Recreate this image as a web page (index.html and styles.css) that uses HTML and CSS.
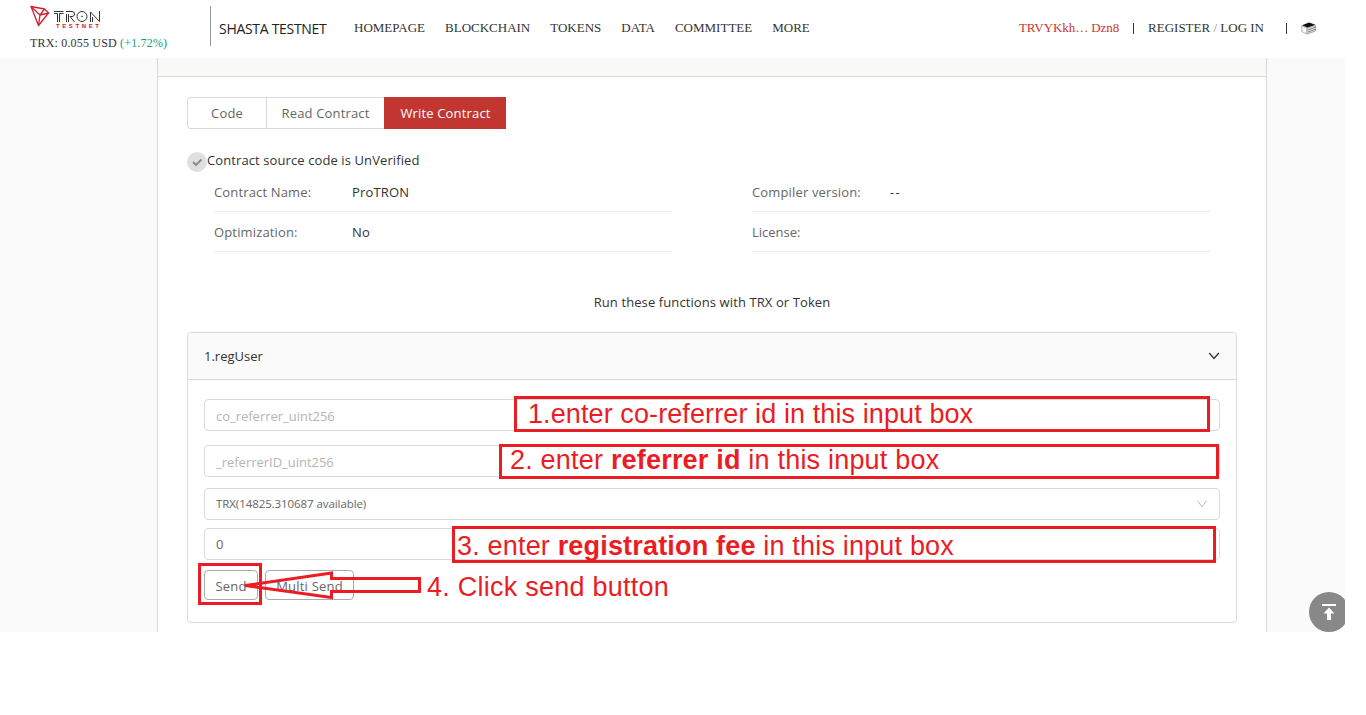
FILE: index.html
```html
<!DOCTYPE html>
<html lang="en">
<head>
<meta charset="utf-8">
<title>TRON Testnet - Write Contract</title>
<link rel="stylesheet" href="styles.css">
</head>
<body>
<div class="app">
  <header class="header">
    <div class="brand">
      <div class="logo">
        <svg class="logo-mark" width="20" height="22" viewBox="0 0 20 22" fill="none" stroke="#d0202e" stroke-width="1.3" stroke-linejoin="round"><path d="M1 1.500 14.500 4 18.500 8 8.500 20.500Z"/><path d="M1 1.500 10 10 18.500 8M14.500 4 10 10 8.500 20.500"/></svg>
        <svg class="logo-word" width="48" height="24" viewBox="0 0 48 24" fill="none">
          <g stroke="#333" stroke-width="1"><path d="M0 6.500H9.500M0 8.500H3.500V17M9.500 8.500H5.500V17M12 6.500H18Q20.500 6.500 20.500 9 20.500 11.500 18 11.500H16L20.500 17M12.500 9V17M14.500 9V17"/><circle cx="28" cy="11.500" r="5"/><path d="M36.500 17V7L45.500 16.500V6M38.500 17V12"/></g>
          <circle cx="28" cy="11.500" r=".8" fill="#333"/>
        </svg>
        <span class="logo-sub">TESTNET</span>
      </div>
      <div class="price">TRX: 0.055 USD <span class="up">(+1.72%)</span></div>
    </div>
    <div class="network">SHASTA TESTNET</div>
    <nav class="nav"><a>HOMEPAGE</a><a>BLOCKCHAIN</a><a>TOKENS</a><a>DATA</a><a>COMMITTEE</a><a>MORE</a></nav>
    <div class="account">
      <span class="address">TRVYKkh… Dzn8</span><i class="bar"></i><span class="login">REGISTER <em>/</em> LOG IN</span><i class="bar bar-last"></i>
      <svg width="16" height="13" viewBox="0 0 16 13"><path d="M.8 4 6 6v6L.8 9.500Z" fill="#fff" stroke="#999" stroke-width=".8"/><path d="M6 6 14.500 3.500V9L6 12.200Z" fill="#ddd" stroke="#999" stroke-width=".8"/><path d="M7 8 15 5M7 10 15 7" stroke="#777" stroke-width=".8"/><path d="M1 3.300 8 .6 14.500 2.800 6.500 5.500Z" fill="#111"/></svg>
    </div>
  </header>
  <main class="page">
    <div class="panel">
      <div class="panel-top"></div>
      <div class="content">
        <div class="tabs"><a class="tab tab-code">Code</a><a class="tab tab-read">Read Contract</a><a class="tab tab-write">Write Contract</a></div>
        <div class="status"><svg width="20" height="20" viewBox="0 0 20 20"><circle cx="10" cy="10" r="10" fill="#dfdfdf"/><path d="m6 10 3 3 5.500-5.500" fill="none" stroke="#888" stroke-width="1.800"/></svg><span>Contract source code is UnVerified</span></div>
        <div class="facts">
          <div class="fact"><span class="label">Contract Name:</span><span>ProTRON</span></div>
          <div class="fact"><span class="label">Compiler version:</span><span class="dashes">--</span></div>
          <div class="fact"><span class="label">Optimization:</span><span>No</span></div>
          <div class="fact"><span class="label label-license">License:</span></div>
        </div>
        <p class="hint">Run these functions with TRX or Token</p>
        <section class="card">
          <div class="card-head"><span>1.regUser</span><svg width="12" height="8" viewBox="0 0 12 8" fill="none" stroke="#333" stroke-width="1.300"><path d="m1.200 1 4.800 5.500L10.800 1"/></svg></div>
          <div class="card-body">
            <div class="field field-a"><span>co_referrer_uint256</span></div>
            <div class="field field-b"><span>_referrerID_uint256</span></div>
            <div class="field field-select"><span>TRX(14825.310687 available)</span><svg width="12" height="8" viewBox="0 0 12 8" fill="none" stroke="#bbb"><path d="m1.500 .8 4.500 6 4.500-6"/></svg></div>
            <div class="field field-amount"><span>0</span></div>
            <div class="buttons"><a class="btn btn-send">Send</a><a class="btn btn-multi">Multi Send</a></div>
          </div>
        </section>
      </div>
    </div>
    <div class="to-top"><svg width="14" height="16" viewBox="0 0 14 16" fill="#fff"><path d="M0 0h14v2H0zM7 3.500 12.500 9.500H9V16H5V9.500H1.500Z"/></svg></div>
  </main>
  <div class="note note-1">1.enter co-referrer id in this input box</div>
  <div class="note note-2">2. enter <b>referrer id</b> in this input box</div>
  <div class="note note-3">3. enter <b>registration fee</b> in this input box</div>
  <div class="note note-send"></div>
  <svg class="arrow" width="182" height="32" viewBox="0 0 182 32" fill="none" stroke="#eb1c24" stroke-width="3"><path d="M4 15.500 90.500 3V8.500H178.500V21.500H90.500V27.500Z"/></svg>
  <div class="note-4">4. Click send button</div>
</div>
</body>
</html>
```
FILE: styles.css
```css
* { box-sizing: border-box; }
body { margin: 0; background: #fff; font: 13px/20px "Open Sans", "Noto Sans", sans-serif; letter-spacing: .1px; color: #333; }
.app { position: relative; width: 1345px; height: 632px; overflow: hidden; display: flex; flex-direction: column; white-space: nowrap; }
.header { height: 58px; flex: none; display: flex; background: #fff; padding-left: 30px; font-family: "Liberation Serif", serif; letter-spacing: 0; }
.brand { width: 180px; padding-top: 5px; }
.logo { position: relative; height: 28px; display: flex; gap: 4px; }
.logo-sub { position: absolute; left: 26px; top: 17px; font: bold 6px/8px "Liberation Sans", sans-serif; letter-spacing: 2.6px; color: #d0202e; }
.price { font-size: 12px; line-height: 20px; letter-spacing: .18px; }
.up { color: #159c75; }
.network { width: 144px; height: 40px; margin-top: 6px; border-left: 1px solid #999; padding: 12px 0 0 8px; font: 14px/22px "Open Sans", sans-serif; letter-spacing: -.3px; color: #222; }
.nav { display: flex; gap: 20px; font-size: 13px; line-height: 20px; padding-top: 18px; }
.account { margin-left: auto; padding: 18px 28px 0 0; display: flex; font-size: 13px; line-height: 20px; }
.account svg { margin: 4px 0 0 14px; }
.address { color: #c73631; letter-spacing: -.08px; }
.bar { width: 1px; height: 11px; background: #333; margin: 5px 14px 0 14px; }
.bar-last { margin: 5px 0 0 22px; }
em { font-style: normal; color: #888; }
.page { position: relative; height: 574px; background: #fafafa; padding-left: 157px; }
.panel { width: 1110px; height: 574px; background: #fff; border: solid #d9d9d9; border-width: 0 1px; }
.panel-top { height: 19px; background: #f9f9f7; border-bottom: 1px solid #dcdcd8; }
.content { padding: 20px 29px 0; }
.tabs { display: flex; letter-spacing: .16px; }
.tab { height: 32px; line-height: 30px; border: 1px solid #d9d9d9; border-right: 0; text-align: center; color: #666; }
.tab-code { width: 79px; border-radius: 4px 0 0 4px; }
.tab-read { width: 118px; }
.tab-write { width: 122px; background: #c23631; border-color: #c23631; color: #fff; }
.status { display: flex; margin-top: 23px; height: 20px; line-height: 17px; }
.facts { display: grid; grid-template-columns: 458px 459px; column-gap: 80px; padding-left: 27px; letter-spacing: .15px; }
.fact { height: 40px; border-bottom: 1px solid #eee; display: flex; padding-top: 10px; }
.label { width: 138px; color: #666; }
.label-license { letter-spacing: 0; }
.dashes { letter-spacing: 1.2px; }
.hint { margin: 40px 0 20px; text-align: center; }
.card { height: 291px; border: 1px solid #d9d9d9; border-radius: 4px; }
.card-head { height: 47px; background: #fafafa; border-bottom: 1px solid #d9d9d9; display: flex; align-items: center; justify-content: space-between; padding: 0 16px; border-radius: 4px 4px 0 0; letter-spacing: 0; }
.card-body { padding: 19px 16px; }
.field { height: 32px; border: 1px solid #d9d9d9; border-radius: 4px; padding: 0 11px; display: flex; align-items: center; justify-content: space-between; color: #b5b5b5; letter-spacing: -.02px; }
.field-a { margin-bottom: 14px; padding-top: 2px; }
.field-b { margin-bottom: 11px; padding-top: 2px; }
.field-select { font-size: 11.5px; letter-spacing: -.08px; color: #666; margin-bottom: 8px; }
.field-amount { color: #666; margin-bottom: 10px; }
.buttons { display: flex; gap: 7px; letter-spacing: .2px; }
.btn { height: 30px; border: 1px solid #aaa; border-radius: 4px; line-height: 30px; text-align: center; color: #666; }
.btn-send { width: 54px; }
.btn-multi { width: 89px; }
.to-top { position: absolute; left: 1309px; top: 534px; width: 40px; height: 40px; border-radius: 50%; background: #888; display: flex; align-items: center; justify-content: center; }
.note, .note-4 { position: absolute; font: 27px/30px "Liberation Sans", Arial, sans-serif; color: #eb1c24; }
.note { border: 3px solid #eb1c24; }
.note-1 { left: 514px; top: 396px; width: 696px; height: 36px; padding-left: 11px; letter-spacing: .1px; }
.note-2 { left: 499px; top: 444px; width: 720px; height: 35px; padding-left: 8px; line-height: 27px; letter-spacing: .2px; }
.note-3 { left: 452px; top: 526px; width: 764px; height: 37px; padding-left: 2px; line-height: 34px; letter-spacing: .18px; }
.note-send { left: 198px; top: 563px; width: 64px; height: 42px; }
.arrow { position: absolute; left: 241px; top: 570px; }
.note-4 { left: 427px; top: 572px; letter-spacing: .25px; }
```
